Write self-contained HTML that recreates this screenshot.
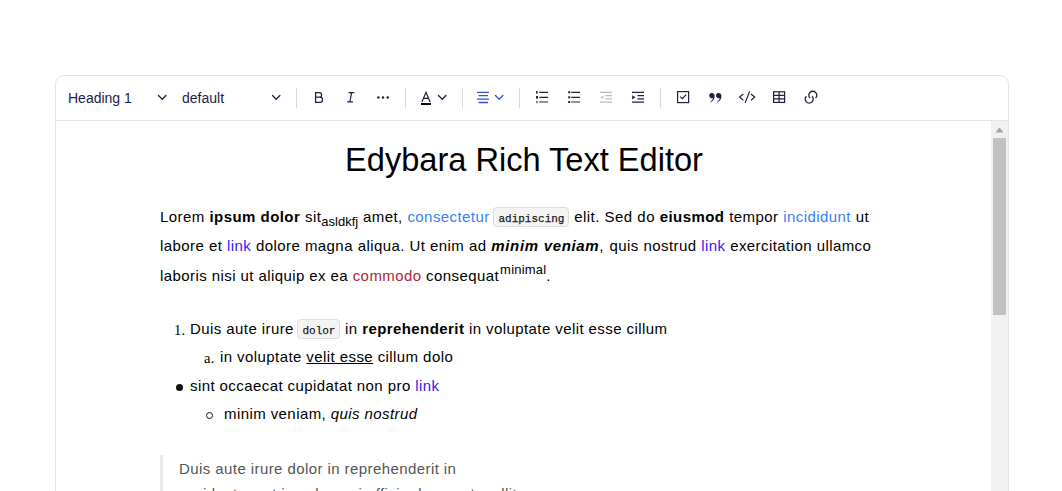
<!DOCTYPE html>
<html><head><meta charset="utf-8">
<style>
*{box-sizing:border-box;margin:0;padding:0}
html,body{width:1062px;height:491px;overflow:hidden;background:#fff;font-family:"Liberation Sans",sans-serif;color:#111}
.abs{position:absolute}
.editor{position:absolute;left:55px;top:75px;width:954px;height:460px;border:1px solid #e4e4e4;border-radius:9px;background:#fff}
.tbline{position:absolute;left:56px;top:120px;width:952px;height:1px;background:#e4e4e4}
.sel{position:absolute;font-size:14px;line-height:16px;color:#1d2244;white-space:nowrap}
.sep{position:absolute;top:88px;width:1px;height:20px;background:#d9d9d9}
.scroll{position:absolute;left:991px;top:121px;width:17px;height:370px;background:#f1f1f1}
.thumb{position:absolute;left:993px;width:13px;top:138px;height:177px;background:#c1c1c1}
.h1{position:absolute;left:0;width:1048px;text-align:center;font-size:32.6px;line-height:40px;color:#000;white-space:nowrap}
.p{position:absolute;left:160px;white-space:nowrap;font-size:15px;letter-spacing:0.42px;line-height:20px;color:#000}
.lnk{color:#2f1cf0}
.lb{color:#3580f8}
.red{color:#a8283a}
code{font-family:"Liberation Mono",monospace;font-size:11px;background:#f4f4f4;border:1px solid #dedede;border-radius:4px;padding:5px 4px 1px;letter-spacing:0;margin-left:-1px;color:#1a1a1a;-webkit-text-stroke:0.25px #1a1a1a}
sub{font-size:13px;letter-spacing:0;vertical-align:-4px;line-height:0}
sup{font-size:13px;letter-spacing:0.2px;vertical-align:7px;line-height:0;margin-left:1px}
svg{position:absolute;overflow:visible}
</style></head><body>
<div class="editor"></div>
<div class="tbline"></div>
<div class="sel" style="left:68px;top:90px">Heading 1</div>
<svg style="left:0;top:0" width="1062" height="130">
  <g fill="none" stroke="#1d2244" stroke-width="1.3" stroke-linecap="round" stroke-linejoin="round">
    <path d="M158.5 95.5 L162.2 99.2 L165.9 95.5"/>
    <path d="M272.5 95.5 L276.2 99.2 L279.9 95.5"/>
    <path d="M438.5 95.5 L442.2 99.2 L445.9 95.5"/>
  </g>
</svg>
<div class="sel" style="left:182px;top:90px">default</div>
<div class="sep" style="left:296px"></div>
<div class="sep" style="left:405px"></div>
<div class="sep" style="left:462px"></div>
<div class="sep" style="left:519px"></div>
<div class="sep" style="left:660px"></div>


<svg style="left:0;top:0" width="1062" height="130"><path d="M315.6 92.6 H319.3 A2.3 2.3 0 0 1 319.3 97.2 H315.6 M315.6 97.2 H320 A2.55 2.55 0 0 1 320 102.3 H315.6 M315.6 92 V102.9" fill="none" stroke="#1d2244" stroke-width="1.25"/></svg>
<svg style="left:0;top:0" width="1062" height="130">
  <g fill="none" stroke="#1d2244" stroke-width="1.2">
    <path d="M348.6 92.6 H354.4 M347.2 101.8 H353 M351.6 92.6 L349.9 101.8"/>
  </g>
  <g fill="#1d2244">
    <circle cx="378.4" cy="97.5" r="1.25"/><circle cx="383" cy="97.5" r="1.25"/><circle cx="387.7" cy="97.5" r="1.25"/>
  </g>
  <g fill="none" stroke="#1d2244" stroke-width="1.2">
    <path d="M421.9 102 L426 92.3 L430.1 102 M423.4 98.4 H428.6"/>
  </g>
  <rect x="421" y="103" width="10" height="2" fill="#000"/>
  <g fill="none" stroke="#3550d0" stroke-width="1.3">
    <path d="M477 92.4 H489 M478.5 95.7 H488 M477 99.1 H489 M478.5 102.5 H488"/>
    <path d="M495.5 95.5 L499.2 99.2 L502.9 95.5" stroke-linecap="round" stroke-linejoin="round"/>
  </g>
  <g fill="none" stroke="#1d2244" stroke-width="1.2">
    <path d="M539.3 92.3 H548.1 M539.3 97.3 H548.1 M539.3 102 H548.1"/>
    <path d="M571.2 92.3 H580 M571.2 97.3 H580 M571.2 102 H580"/>
  </g>
  <g fill="#1d2244">
    <rect x="536" y="91" width="1.6" height="2.6"/>
    <rect x="536" y="96" width="2" height="2.6"/>
    <rect x="536" y="100.7" width="2" height="2.6" fill="#888"/>
    <rect x="568.2" y="91.3" width="2" height="2"/>
    <rect x="568.2" y="96.3" width="2" height="2"/>
    <rect x="568.2" y="101" width="2" height="2"/>
  </g>
  <g fill="none" stroke="#bdbdbd" stroke-width="1.2">
    <path d="M600 92.3 H612 M605.3 95.6 H612 M605.3 98.8 H612 M600 102.2 H612"/>
  </g>
  <path d="M603.3 95.3 L600.3 97.3 L603.3 99.3 Z" fill="#c4c4c4"/>
  <g fill="none" stroke="#1d2244" stroke-width="1.2">
    <path d="M632 92.3 H644 M637.5 95.6 H644 M637.5 98.8 H644 M632 102.2 H644"/>
  </g>
  <path d="M632.2 95.2 L635.4 97.3 L632.2 99.4 Z" fill="#1d2244"/>
  <g fill="none" stroke="#1d2244" stroke-width="1.2">
    <rect x="677.6" y="91.6" width="11" height="11"/>
    <path d="M680.2 96.6 L682.3 98.7 L686.2 94.6"/>
  </g>
  <g fill="#1d2244">
    <path d="M711.6 93 a2.6 2.6 0 1 0 1.4 4.9 c-0.3 1.6 -1.3 3 -2.9 4 l0.5 0.5 c2.6 -1.3 4.1 -3.6 4 -6.3 a2.8 2.8 0 0 0 -3 -3.1 z"/>
    <path d="M718.4 93 a2.6 2.6 0 1 0 1.4 4.9 c-0.3 1.6 -1.3 3 -2.9 4 l0.5 0.5 c2.6 -1.3 4.1 -3.6 4 -6.3 a2.8 2.8 0 0 0 -3 -3.1 z"/>
  </g>
  <g fill="none" stroke="#1d2244" stroke-width="1.2">
    <path d="M743.3 94 L739.6 97.1 L743.3 100.2 M751 94 L754.7 97.1 L751 100.2 M745.2 102.8 L749.6 91.4"/>
    <rect x="773.6" y="91.8" width="11" height="10.6"/>
    <path d="M779.1 91.8 V102.4 M773.6 95.3 H784.6 M773.6 98.9 H784.6"/>
    <path d="M810 98.1 A4 4 0 1 1 815.6 98.1" stroke-width="1.3"/>
    <path d="M812 96.2 A4 4 0 1 1 806.4 96.2" stroke-width="1.3"/>
  </g>
</svg>
<div class="scroll"></div>
<div class="thumb"></div>
<svg style="left:0;top:0" width="1062" height="491"><path d="M995.5 132.5 L999.5 127.5 L1003.5 132.5 Z" fill="#a3a3a3"/></svg>

<div class="h1" style="top:140px">Edybara Rich Text Editor</div>
<div class="p" style="top:207px;word-spacing:0.25px">Lorem <b>ipsum dolor</b> sit<sub>asldkfj</sub> amet, <span class="lb">consectetur</span> <code>adipiscing</code> elit. Sed do <b>eiusmod</b> tempor <span class="lb">incididunt</span> ut</div>
<div class="p" style="top:236px;word-spacing:0.15px">labore et <span class="lnk">link</span> dolore magna aliqua. Ut enim ad <b><i style="letter-spacing:0.65px">minim veniam</i></b>,<span style="margin-left:1px"> quis nostrud <span class="lnk">link</span> exercitation ullamco</span></div>
<div class="p" style="top:266px">laboris nisi ut aliquip ex ea <span class="red">commodo</span> consequat<sup>minimal</sup>.</div>

<div class="p" style="top:320px;left:174px;font-family:'Liberation Serif',serif;font-size:14.5px;letter-spacing:0.3px">1.</div>
<div class="p" style="top:319px;left:190px">Duis aute irure <code>dolor</code> in <b>reprehenderit</b> in voluptate velit esse cillum</div>
<div class="p" style="top:348px;left:204px;font-family:'Liberation Serif',serif;font-size:14.5px;letter-spacing:0.3px">a.</div>
<div class="p" style="top:347px;left:220px">in voluptate <u>velit esse</u> cillum dolo</div>
<div class="abs" style="left:176px;top:384px;width:7px;height:7px;border-radius:50%;background:#111"></div>
<div class="p" style="top:376px;left:190px">sint occaecat cupidatat non pro <span class="lnk">link</span></div>
<div class="abs" style="left:206px;top:412px;width:7px;height:7px;border-radius:50%;border:1px solid #111"></div>
<div class="p" style="top:404px;left:224px">minim veniam, <i>quis nostrud</i></div>
<div class="abs" style="left:160px;top:455px;width:3px;height:40px;background:#e8e8e8"></div>
<div class="p" style="top:459px;left:179px;color:#555">Duis aute irure dolor in reprehenderit in</div>
<div class="p" style="top:484px;left:180px;color:#555">proident, sunt in culpa qui officia deserunt mollit</div>
</body></html>
